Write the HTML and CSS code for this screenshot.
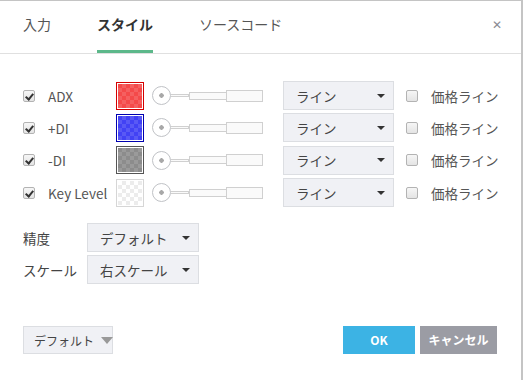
FILE: index.html
```html
<!DOCTYPE html>
<html lang="ja">
<head>
  <meta charset="UTF-8" />
  <title>スタイル</title>
  <link rel="stylesheet" href="styles.css">
</head>
<body>
  <div class="dialog">
    <header class="tabs">
      <span class="tab">入力</span>
      <span class="tab active">スタイル</span>
      <span class="tab">ソースコード</span>
      <span class="close">&#x2715;</span>
    </header>

    <section class="plots">
      <div class="row">
        <span class="check on"></span>
        <span class="name">ADX</span>
        <span class="swatch red"></span>
        <span class="slider"><i class="knob"></i><i class="wire"></i><i class="bar1"></i><i class="bar2"></i></span>
        <span class="select wide">ライン<b class="arrow"></b></span>
        <span class="check"></span>
        <span class="price">価格ライン</span>
      </div>
      <div class="row">
        <span class="check on"></span>
        <span class="name">+DI</span>
        <span class="swatch blue"></span>
        <span class="slider"><i class="knob"></i><i class="wire"></i><i class="bar1"></i><i class="bar2"></i></span>
        <span class="select wide">ライン<b class="arrow"></b></span>
        <span class="check"></span>
        <span class="price">価格ライン</span>
      </div>
      <div class="row">
        <span class="check on"></span>
        <span class="name">-DI</span>
        <span class="swatch gray"></span>
        <span class="slider"><i class="knob"></i><i class="wire"></i><i class="bar1"></i><i class="bar2"></i></span>
        <span class="select wide">ライン<b class="arrow"></b></span>
        <span class="check"></span>
        <span class="price">価格ライン</span>
      </div>
      <div class="row">
        <span class="check on"></span>
        <span class="name">Key Level</span>
        <span class="swatch clear"></span>
        <span class="slider"><i class="knob"></i><i class="wire"></i><i class="bar1"></i><i class="bar2"></i></span>
        <span class="select wide">ライン<b class="arrow"></b></span>
        <span class="check"></span>
        <span class="price">価格ライン</span>
      </div>
    </section>

    <section class="options">
      <div class="opt">
        <span class="opt-label">精度</span>
        <span class="select small">デフォルト<b class="arrow"></b></span>
      </div>
      <div class="opt">
        <span class="opt-label">スケール</span>
        <span class="select small">右スケール<b class="arrow"></b></span>
      </div>
    </section>

    <footer class="footer">
      <span class="btn-default">デフォルト<b class="arrow light"></b></span>
      <span class="spacer"></span>
      <span class="btn ok">OK</span>
      <span class="btn cancel">キャンセル</span>
    </footer>
  </div>
</body>
</html>
```

FILE: styles.css
```css
* {
  box-sizing: border-box;
  margin: 0;
  padding: 0;
}

body {
  font-family: "Noto Sans CJK JP", "DejaVu Sans", sans-serif;
  font-size: 13.5px;
  color: #4a4a4a;
  background: #fff;
}

.dialog {
  width: 523px;
  height: 380px;
  border-top: 1px solid #c4c4c4;
  border-right: 2px solid #c4c4c4;
  background: #fff;
}

.tabs {
  height: 53px;
  display: flex;
  align-items: flex-end;
  border-bottom: 1px solid #e0e0e0;
  padding-left: 23px;
  padding-right: 19px;
}

.tab {
  margin-right: 46px;
  height: 52px;
  line-height: 47px;
  font-size: 14px;
  color: #555;
  border-bottom: 3px solid transparent;
}

.tab.active {
  font-weight: bold;
  color: #333;
  border-bottom-color: #5cb88a;
}

.close {
  margin-left: auto;
  align-self: flex-start;
  margin-top: 14px;
  font-size: 12px;
  color: #8a8c92;
  font-weight: bold;
}

.plots {
  padding: 27px 0 0 23px;
  display: flex;
  flex-direction: column;
  gap: 3.4px;
}

.row {
  height: 29px;
  display: flex;
  align-items: center;
}

.check {
  width: 12px;
  height: 12px;
  border: 1px solid #b3b3b3;
  border-radius: 2px;
  background: linear-gradient(#f6f6f6, #e4e4e4);
  position: relative;
  flex: none;
}

.check.on::after {
  content: "";
  position: absolute;
  left: 3px;
  top: 1px;
  width: 3px;
  height: 6px;
  border: solid #333;
  border-width: 0 2px 2px 0;
  transform: rotate(40deg);
}

.name {
  width: 68px;
  margin-left: 13px;
  color: #555;
}

.swatch {
  width: 28px;
  height: 28px;
  padding: 1px;
  border: 1px solid;
  background-clip: content-box;
  background-image: conic-gradient(rgba(255,255,255,0.12) 25%, transparent 0 50%, rgba(255,255,255,0.12) 0 75%, transparent 0);
  background-size: 8px 8px;
  background-origin: content-box;
  flex: none;
}

.swatch.red { border-color: #d40000; background-color: #f44a4a; }
.swatch.blue { border-color: #0000b0; background-color: #4242f4; }
.swatch.gray { border-color: #555; background-color: #8c8c8c; }
.swatch.clear {
  border-color: #d6d6d6;
  background-color: #fff;
  background-image: conic-gradient(#ececec 25%, transparent 0 50%, #ececec 0 75%, transparent 0);
}

.slider {
  margin-left: 8px;
  width: 112px;
  display: flex;
  align-items: center;
  flex: none;
}

.slider i { display: block; flex: none; }

.knob {
  width: 19px;
  height: 19px;
  border: 1px solid #c0c2c6;
  border-radius: 50%;
  background: radial-gradient(circle, #a8a8a8 0 2px, #fff 2.5px);
}

.wire {
  width: 18px;
  height: 3px;
  border: 1px solid #d0d0d0;
  border-left: none;
  background: #fafafa;
}

.bar1 {
  width: 37px;
  height: 8px;
  border: 1px solid #d0d0d0;
  border-right: none;
  background: #fafafa;
}

.bar2 {
  width: 37px;
  height: 12px;
  border: 1px solid #d0d0d0;
  background: #fafafa;
}

.select {
  height: 29px;
  display: flex;
  align-items: center;
  padding-left: 12px;
  background: #f0f1f5;
  border: 1px solid #dcdee2;
  color: #444;
  white-space: nowrap;
  flex: none;
}

.select.wide {
  width: 111px;
  margin-left: 19px;
  margin-right: 12px;
}

.arrow {
  margin-left: auto;
  margin-right: 8px;
  width: 0;
  height: 0;
  border-left: 4px solid transparent;
  border-right: 4px solid transparent;
  border-top: 4px solid #333;
}

.price {
  margin-left: 13px;
  color: #555;
}

.options {
  padding: 16px 0 0 23px;
  display: flex;
  flex-direction: column;
  gap: 3px;
}

.opt {
  display: flex;
  align-items: center;
}

.opt-label {
  width: 64px;
  color: #444;
}

.select.small {
  width: 112px;
  height: 29px;
}

.footer {
  margin-top: 42px;
  padding: 0 24px 0 23px;
  display: flex;
  align-items: center;
}

.btn-default {
  width: 90px;
  height: 28px;
  display: flex;
  align-items: center;
  padding-left: 10px;
  font-size: 12px;
  white-space: nowrap;
  color: #444;
  background: #f0f1f5;
  border: 1px solid #dcdee2;
}

.arrow.light {
  margin-left: 7px;
  margin-right: 0;
  border-left-width: 6px;
  border-right-width: 6px;
  border-top: 7px solid #999;
}

.spacer { flex: 1; }

.btn {
  height: 28px;
  line-height: 28px;
  text-align: center;
  color: #fff;
  font-size: 12px;
  font-weight: bold;
}

.btn.ok {
  width: 72px;
  background: #3cb3e4;
}

.btn.cancel {
  width: 77px;
  margin-left: 5px;
  background: #9b9ca4;
}
```
